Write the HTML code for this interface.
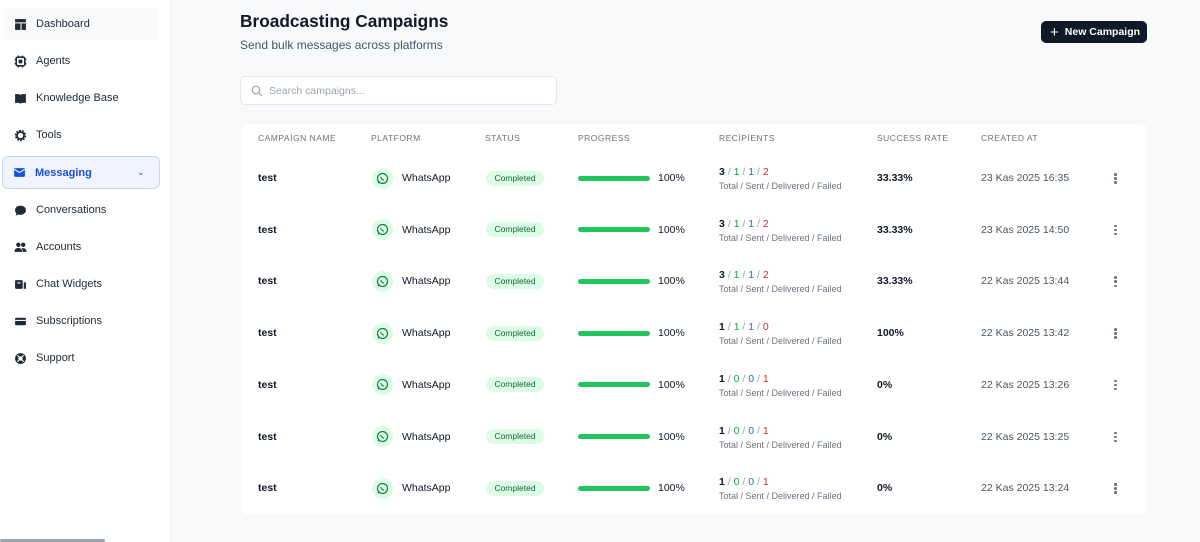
<!DOCTYPE html>
<html><head><meta charset="utf-8"><style>
*{box-sizing:border-box;margin:0;padding:0}
body{width:1200px;height:542px;overflow:hidden;font-family:"Liberation Sans",sans-serif;background:#f8f9fb;color:#111827;position:relative}
.side{position:absolute;left:0;top:0;width:171px;height:542px;background:#fff;border-right:1px solid #eef0f3}
.nav{position:absolute;left:4px;width:155px;height:32px;display:flex;align-items:center;font-size:11px;color:#1f2937}
.nav svg{position:absolute;left:10px;width:13px;height:13px}
.nav span{position:absolute;left:32px}
.act{background:#eff4fe;border:1px solid #c7d7f7;border-radius:6px;color:#1d4ed8}
h1{position:absolute;left:240px;top:11px;font-size:17.3px;font-weight:700;color:#111827}
.sub{position:absolute;left:240px;top:38px;font-size:12px;color:#4b5563}
.btn{position:absolute;left:1041px;top:21px;width:106px;height:22px;background:#111827;border-radius:5px;color:#fff;font-size:10.5px;font-weight:700;display:flex;align-items:center;padding-left:9px}
.search{position:absolute;left:240px;top:76px;width:317px;height:29px;background:#fff;border:1px solid #e5e7eb;border-radius:5px;font-size:10.5px;color:#9ca3af;padding:8px 0 0 28px}
.card{position:absolute;left:241px;top:124px;width:906px;height:390px;background:#fff;border-radius:6px}
.th{position:absolute;top:133px;font-size:8.5px;letter-spacing:.5px;color:#6b7280}
.c{position:absolute;font-size:10.5px}
.wa{position:absolute;width:21px;height:21px;border-radius:50%;background:#dcfce7}
.badge{position:absolute;width:58px;height:15px;border-radius:8px;background:#dcfce7;color:#166534;font-size:8.5px;text-align:center;line-height:15px}
.bar{position:absolute;width:72px;height:5px;border-radius:3px;background:#22c55e}
.g{color:#16a34a}.b{color:#2563eb}.r{color:#dc2626}.s{color:#9ca3af}
.dots{position:absolute;width:3px}
.dots i{display:block;width:2.5px;height:2.5px;border-radius:50%;background:#6b7280;margin-bottom:1.6px}
</style></head><body>
<div class="side">
<div class="nav" style="top:8px;background:#f9fafb;border-radius:6px"><svg viewBox="0 0 12 12"><rect x="1" y="1" width="10" height="3" fill="#1f2937"/><rect x="1" y="5" width="5" height="6" fill="#1f2937"/><rect x="7" y="5" width="4" height="6" fill="#1f2937"/></svg><span>Dashboard</span></div>
<div class="nav" style="top:45px"><svg viewBox="0 0 12 12"><rect x="2" y="2" width="8" height="8" rx="1.5" fill="none" stroke="#1f2937" stroke-width="1.5"/><rect x="4.3" y="4.3" width="3.4" height="3.4" fill="#1f2937"/><path d="M4 0.5v1.5M8 0.5v1.5M4 10v1.5M8 10v1.5M0.5 4h1.5M0.5 8h1.5M10 4h1.5M10 8h1.5" stroke="#1f2937" stroke-width="1"/></svg><span>Agents</span></div>
<div class="nav" style="top:82px"><svg viewBox="0 0 12 12"><path d="M1 2h4l1 1 1-1h4v8H7l-1 1-1-1H1z" fill="#1f2937"/></svg><span>Knowledge Base</span></div>
<div class="nav" style="top:119px"><svg viewBox="0 0 12 12"><circle cx="6" cy="6" r="4" fill="none" stroke="#1f2937" stroke-width="2.4" stroke-dasharray="1.6 0.9"/><circle cx="6" cy="6" r="3.2" fill="none" stroke="#1f2937" stroke-width="1.5"/></svg><span>Tools</span></div>
<div class="nav act" style="top:156px;left:2px;width:158px;height:33px"><svg viewBox="0 0 12 12"><rect x="1" y="2" width="10" height="8" rx="1" fill="#1d4ed8"/><path d="M1 3l5 3 5-3" stroke="#eff4fe" fill="none" stroke-width="1"/></svg><span style="font-weight:700">Messaging</span><span style="left:134px;font-size:9px">⌄</span></div>
<div class="nav" style="top:194px"><svg viewBox="0 0 12 12"><path d="M6 1.5c3 0 5 1.8 5 4.2S9 10 6 10c-.8 0-1.5-.1-2-.3L1.5 10.8l.8-2C1.4 8 1 7 1 5.7 1 3.3 3 1.5 6 1.5z" fill="#1f2937"/></svg><span>Conversations</span></div>
<div class="nav" style="top:231px"><svg viewBox="0 0 12 12"><circle cx="4" cy="3.5" r="2" fill="#1f2937"/><circle cx="8.5" cy="3.5" r="2" fill="#1f2937"/><path d="M0.5 10c0-2.5 1.5-3.5 3.5-3.5S7.5 7.5 7.5 10zM8 10c0-1.5-.3-2.5-1-3.3 3-.5 4.5.8 4.5 3.3z" fill="#1f2937"/></svg><span>Accounts</span></div>
<div class="nav" style="top:268px"><svg viewBox="0 0 12 12"><rect x="1" y="2" width="7" height="8" rx="1" fill="#1f2937"/><rect x="3" y="4" width="3" height="1" fill="#fff"/><rect x="9" y="4" width="2" height="6" fill="#1f2937"/></svg><span>Chat Widgets</span></div>
<div class="nav" style="top:305px"><svg viewBox="0 0 12 12"><rect x="1" y="2.5" width="10" height="7" rx="1" fill="#1f2937"/><rect x="1" y="4.5" width="10" height="1" fill="#fff"/></svg><span>Subscriptions</span></div>
<div class="nav" style="top:342px"><svg viewBox="0 0 12 12"><circle cx="6" cy="6" r="5" fill="#1f2937"/><circle cx="6" cy="6" r="2" fill="#fff"/><path d="M3 3l2 2M9 3L7 5M3 9l2-2M9 9L7 7" stroke="#fff" stroke-width="1"/></svg><span>Support</span></div>
<div style="position:absolute;left:0;top:539px;width:105px;height:3px;background:#9ca3af;border-radius:2px"></div>
</div>
<h1>Broadcasting Campaigns</h1>
<div class="sub">Send bulk messages across platforms</div>
<div class="btn"><span style="font-size:15px;font-weight:400;margin-right:6px;line-height:1">+</span>New Campaign</div>
<div class="search"><svg style="position:absolute;left:10px;top:8px" width="12" height="12" viewBox="0 0 12 12"><circle cx="5" cy="5" r="3.8" fill="none" stroke="#9ca3af" stroke-width="1.2"/><path d="M8 8l3 3" stroke="#9ca3af" stroke-width="1.2"/></svg>Search campaigns...</div>
<div class="card"></div>
<div class="th" style="left:258px">CAMPAİGN NAME</div>
<div class="th" style="left:371px">PLATFORM</div>
<div class="th" style="left:485px">STATUS</div>
<div class="th" style="left:578px">PROGRESS</div>
<div class="th" style="left:719px">RECİPİENTS</div>
<div class="th" style="left:877px">SUCCESS RATE</div>
<div class="th" style="left:981px">CREATED AT</div>
<div id="rows"></div>
<script>
var d=[["3","1","1","2","33.33%","23 Kas 2025 16:35"],["3","1","1","2","33.33%","23 Kas 2025 14:50"],["3","1","1","2","33.33%","22 Kas 2025 13:44"],["1","1","1","0","100%","22 Kas 2025 13:42"],["1","0","0","1","0%","22 Kas 2025 13:26"],["1","0","0","1","0%","22 Kas 2025 13:25"],["1","0","0","1","0%","22 Kas 2025 13:24"]];
var h="";
d.forEach(function(r,i){var y=178+i*51.7;
h+='<div class="c" style="left:258px;top:'+(y-6)+'px;font-weight:700">test</div>';
h+='<div class="wa" style="left:372px;top:'+(y-10.5)+'px"><svg width="21" height="21" viewBox="0 0 21 21"><circle cx="10.5" cy="10.5" r="5" fill="none" stroke="#15803d" stroke-width="1.2"/><path d="M6.3 15.3l.7-2.4" stroke="#15803d" stroke-width="1.2"/><path d="M8.7 8.8c.3 1.6 1.6 3 3.4 3.4" stroke="#15803d" stroke-width="1.2" fill="none"/></svg></div>';
h+='<div class="c" style="left:402px;top:'+(y-6)+'px">WhatsApp</div>';
h+='<div class="badge" style="left:486px;top:'+(y-7.5)+'px">Completed</div>';
h+='<div class="bar" style="left:578px;top:'+(y-2.5)+'px"></div>';
h+='<div class="c" style="left:658px;top:'+(y-6)+'px">100%</div>';
h+='<div class="c" style="left:719px;top:'+(y-12)+'px"><b>'+r[0]+'</b> <span class="s">/</span> <span class="g">'+r[1]+'</span> <span class="s">/</span> <span class="b">'+r[2]+'</span> <span class="s">/</span> <span class="r">'+r[3]+'</span></div>';
h+='<div class="c" style="left:719px;top:'+(y+3)+'px;font-size:9px;color:#6b7280">Total / Sent / Delivered / Failed</div>';
h+='<div class="c" style="left:877px;top:'+(y-6)+'px;font-weight:700">'+r[4]+'</div>';
h+='<div class="c" style="left:981px;top:'+(y-6)+'px;color:#4b5563">'+r[5]+'</div>';
h+='<div class="dots" style="left:1114px;top:'+(y-5)+'px"><i></i><i></i><i></i></div>';
});
document.getElementById("rows").innerHTML=h;
</script>
</body></html>
